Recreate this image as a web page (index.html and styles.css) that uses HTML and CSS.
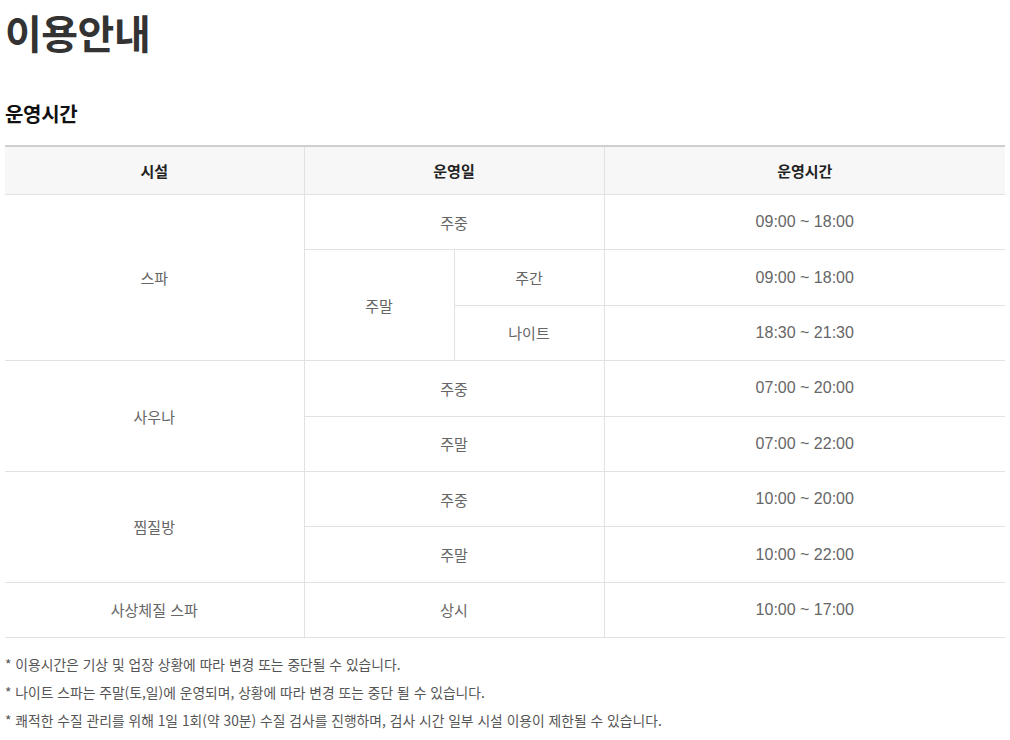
FILE: index.html
```html
<!DOCTYPE html>
<html lang="ko">
<head>
<meta charset="utf-8">
<title>이용안내</title>
<link rel="stylesheet" href="styles.css">
</head>
<body>
<div class="page">
  <h1 class="title">이용안내</h1>
  <h2 class="subtitle">운영시간</h2>
  <table class="hours">
    <colgroup>
      <col class="c1"><col class="c2"><col class="c3"><col class="c4">
    </colgroup>
    <thead>
      <tr><th class="first">시설</th><th colspan="2">운영일</th><th>운영시간</th></tr>
    </thead>
    <tbody>
      <tr><td class="first" rowspan="3">스파</td><td colspan="2">주중</td><td class="time">09:00 ~ 18:00</td></tr>
      <tr><td rowspan="2">주말</td><td>주간</td><td class="time">09:00 ~ 18:00</td></tr>
      <tr><td>나이트</td><td class="time">18:30 ~ 21:30</td></tr>
      <tr><td class="first" rowspan="2">사우나</td><td colspan="2">주중</td><td class="time">07:00 ~ 20:00</td></tr>
      <tr><td colspan="2">주말</td><td class="time">07:00 ~ 22:00</td></tr>
      <tr><td class="first" rowspan="2">찜질방</td><td colspan="2">주중</td><td class="time">10:00 ~ 20:00</td></tr>
      <tr><td colspan="2">주말</td><td class="time">10:00 ~ 22:00</td></tr>
      <tr><td class="first">사상체질 스파</td><td colspan="2">상시</td><td class="time">10:00 ~ 17:00</td></tr>
    </tbody>
  </table>
  <ul class="notes">
    <li>* 이용시간은 기상 및 업장 상황에 따라 변경 또는 중단될 수 있습니다.</li>
    <li>* 나이트 스파는 주말(토,일)에 운영되며, 상황에 따라 변경 또는 중단 될 수 있습니다.</li>
    <li>* 쾌적한 수질 관리를 위해 1일 1회(약 30분) 수질 검사를 진행하며, 검사 시간 일부 시설 이용이 제한될 수 있습니다.</li>
  </ul>
</div>
</body>
</html>
```

FILE: styles.css
```css
html, body {
  margin: 0;
  padding: 0;
  background: #fff;
}
body {
  font-family: "Noto Sans CJK KR", "Noto Sans", sans-serif;
  color: #333;
}
.page {
  padding: 0 5px;
}
.title {
  margin: 7px 0 0;
  font-size: 40px;
  line-height: 50px;
  font-weight: 700;
  color: #333;
  letter-spacing: -0.5px;
}
.subtitle {
  margin: 43px 0 17px;
  font-size: 20px;
  line-height: 28px;
  font-weight: 700;
  color: #111;
  letter-spacing: -0.3px;
}
.hours {
  width: 1000px;
  border-collapse: collapse;
  table-layout: fixed;
  border-top: 2px solid #cfcfcf;
  font-size: 15px;
}
.hours .c1 { width: 299px; }
.hours .c2 { width: 150px; }
.hours .c3 { width: 150px; }
.hours .c4 { width: 401px; }
.hours th,
.hours td {
  text-align: center;
  vertical-align: middle;
  border-bottom: 1px solid #e2e2e2;
  border-left: 1px solid #e2e2e2;
  padding: 0;
}
.hours .first {
  border-left: none;
}
.hours th {
  height: 47px;
  background: #f7f7f7;
  font-weight: 700;
  color: #222;
}
.hours td {
  height: 54.4px;
  color: #666;
}
.hours td.time {
  font-family: "Liberation Sans", "Noto Sans CJK KR", sans-serif;
  font-size: 16px;
  color: #666;
}
.notes {
  list-style: none;
  margin: 12px 0 0;
  padding: 0;
  font-size: 13.8px;
  line-height: 28px;
  color: #555;
}
```
